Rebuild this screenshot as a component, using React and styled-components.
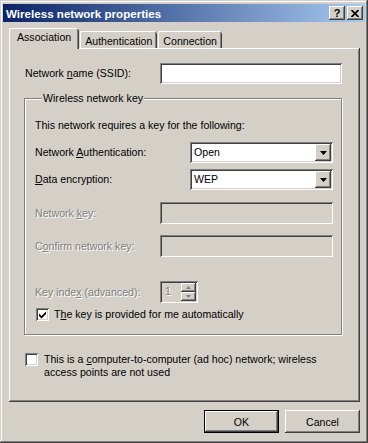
import React from "react"
import styled, { createGlobalStyle, css } from "styled-components"

const colors = {
  face: "#d4d0c8",
  light: "#ffffff",
  shadow: "#808080",
  dark: "#404040",
  text: "#000000",
  titleFrom: "#0a246a",
  titleTo: "#a6caf0",
}

const raised = css`
  box-shadow: inset -1px -1px ${colors.dark}, inset 1px 1px ${colors.light},
    inset -2px -2px ${colors.shadow}, inset 2px 2px ${colors.face};
`

const sunken = css`
  box-shadow: inset 1px 1px ${colors.shadow}, inset -1px -1px ${colors.light},
    inset 2px 2px ${colors.dark}, inset -2px -2px ${colors.face};
`

const GlobalStyle = createGlobalStyle`
  html, body {
    margin: 0;
    padding: 0;
    background: ${colors.face};
  }
  body {
    font-family: "Liberation Sans", Arial, sans-serif;
    font-size: 10.6px;
    color: ${colors.text};
  }
  * { box-sizing: border-box; }
`

const Window = styled.div`
  width: 368px;
  height: 443px;
  padding: 4px 3px;
  display: flex;
  flex-direction: column;
  background: ${colors.face};
  box-shadow: inset -1px -1px ${colors.dark}, inset 1px 1px ${colors.face},
    inset -2px -2px ${colors.shadow}, inset 2px 2px ${colors.light};
`

const TitleBar = styled.div`
  height: 18px;
  display: flex;
  align-items: center;
  padding: 0 2px 0 3px;
  background: linear-gradient(to right, ${colors.titleFrom}, ${colors.titleTo});
`

const Title = styled.span`
  flex: 1;
  color: #fff;
  font-weight: bold;
  font-size: 11.6px;
`

const TitleButtons = styled.div`
  display: flex;
  gap: 2px;
`

const TitleButton = styled.div`
  width: 16px;
  height: 14px;
  display: flex;
  align-items: center;
  justify-content: center;
  background: ${colors.face};
  font-weight: bold;
  font-size: 11px;
  line-height: 1;
  padding-top: 1px;
  ${raised}
`

const Body = styled.div`
  display: flex;
  flex-direction: column;
  padding: 0 5px 0 6px;
`

const TabStrip = styled.div`
  display: flex;
  align-items: flex-end;
  height: 26px;
  gap: 1px;
`

const Tab = styled.div`
  position: relative;
  z-index: ${p => (p.$active ? 1 : 0)};
  height: ${p => (p.$active ? "21px" : "17px")};
  margin-bottom: ${p => (p.$active ? "-1px" : "0")};
  padding: ${p => (p.$active ? "3px 8px 0" : "4px 5px 0")};
  background: ${colors.face};
  border-radius: 2px 2px 0 0;
  box-shadow: inset 1px 0 ${colors.light}, inset 0 1px ${colors.light},
    inset -1px 0 ${colors.dark}, inset -2px 0 ${colors.shadow};
  line-height: 13px;
  white-space: nowrap;
`

const Panel = styled.div`
  height: 354px;
  display: flex;
  flex-direction: column;
  padding: 15px 18px 0 16px;
  ${raised}
`

const Row = styled.div`
  display: grid;
  grid-template-columns: ${p => p.$cols};
  align-items: center;
  margin-top: ${p => p.$gap || 0}px;
`

const Label = styled.span`
  line-height: 13px;
  white-space: nowrap;
  color: ${p => (p.$disabled ? colors.shadow : colors.text)};
  text-shadow: ${p => (p.$disabled ? `1px 1px 0 ${colors.light}` : "none")};
`

const Key = styled.span`
  text-decoration: underline;
  text-underline-offset: 1px;
`

const TextBox = styled.div`
  height: ${p => p.$h || 21}px;
  background: ${p => (p.$disabled ? colors.face : colors.light)};
  ${sunken}
`

const Group = styled.fieldset`
  margin: 8px 0 0 -1px;
  padding: 0 8px 13px 10px;
  min-width: 0;
  border: 1px solid ${colors.shadow};
  box-shadow: inset 1px 1px ${colors.light}, 1px 1px ${colors.light};
`

const Legend = styled.legend`
  margin-left: 7px;
  padding: 0 1px;
  line-height: 13px;
  background: ${colors.face};
`

const Text = styled.div`
  line-height: 13px;
  margin-top: ${p => p.$gap || 0}px;
`

const SelectBox = styled.div`
  height: 21px;
  display: flex;
  align-items: center;
  padding: 0 2px 0 4px;
  background: ${colors.light};
  ${sunken}
`

const SelectValue = styled.span`
  flex: 1;
  line-height: 13px;
`

const DropButton = styled.div`
  width: 16px;
  height: 17px;
  display: flex;
  align-items: center;
  justify-content: center;
  background: ${colors.face};
  ${raised}
`

const SpinBox = styled.div`
  height: 22px;
  display: flex;
  align-items: stretch;
  padding: 2px;
  background: ${colors.face};
  ${sunken}
`

const SpinValue = styled.span`
  flex: 1;
  padding: 2px 0 0 3px;
  line-height: 13px;
  color: ${colors.shadow};
  text-shadow: 1px 1px 0 ${colors.light};
`

const SpinButtons = styled.div`
  width: 15px;
  display: flex;
  flex-direction: column;
`

const SpinButton = styled.div`
  flex: 1;
  display: flex;
  align-items: center;
  justify-content: center;
  background: ${colors.face};
  ${raised}
`

const CheckRow = styled.div`
  display: flex;
  align-items: flex-start;
  gap: ${p => p.$space || 5}px;
  margin-top: ${p => p.$gap || 0}px;
  padding-left: ${p => p.$indent || 0}px;
`

const CheckBox = styled.div`
  flex: none;
  width: 13px;
  height: 13px;
  display: flex;
  align-items: center;
  justify-content: center;
  background: ${colors.light};
  ${sunken}
`

const Footer = styled.div`
  display: flex;
  justify-content: flex-end;
  gap: 6px;
  margin-top: 8px;
`

const Button = styled.div`
  width: 75px;
  height: 23px;
  display: flex;
  align-items: center;
  justify-content: center;
  background: ${colors.face};
  ${p =>
    p.$default
      ? css`
          box-shadow: inset 0 0 0 1px ${colors.text},
            inset -2px -2px ${colors.dark}, inset 2px 2px ${colors.light},
            inset -3px -3px ${colors.shadow};
        `
      : raised}
`

const Arrow = () => (
  <svg width="7" height="4" viewBox="0 0 7 4">
    <polygon points="0,0 7,0 3.5,4" fill={colors.text} />
  </svg>
)

const SmallArrow = ({ down }) => (
  <svg width="5" height="3" viewBox="0 0 5 3">
    <polygon points={down ? "0,0 5,0 2.5,3" : "0,3 5,3 2.5,0"} fill={colors.shadow} />
  </svg>
)

const Check = () => (
  <svg width="7" height="8" viewBox="0 0 7 8">
    <polygon points="0,2.5 2.5,5 7,0.5 7,3 2.5,7.5 0,5" fill={colors.text} />
  </svg>
)

const CloseGlyph = () => (
  <svg width="8" height="7" viewBox="0 0 8 7">
    <path d="M0.5 0 L7.5 7 M7.5 0 L0.5 7" stroke={colors.text} strokeWidth="1.7" />
  </svg>
)

const Select = ({ value }) => (
  <SelectBox>
    <SelectValue>{value}</SelectValue>
    <DropButton>
      <Arrow />
    </DropButton>
  </SelectBox>
)

const App = () => {
  return (
    <>
      <GlobalStyle />
      <Window>
        <TitleBar>
          <Title>Wireless network properties</Title>
          <TitleButtons>
            <TitleButton>?</TitleButton>
            <TitleButton>
              <CloseGlyph />
            </TitleButton>
          </TitleButtons>
        </TitleBar>

        <Body>
          <TabStrip>
            <Tab $active>Association</Tab>
            <Tab>Authentication</Tab>
            <Tab>Connection</Tab>
          </TabStrip>

          <Panel>
            <Row $cols="135px 1fr">
              <Label>
                Network <Key>n</Key>ame (SSID):
              </Label>
              <TextBox />
            </Row>

            <Group>
              <Legend>Wireless network key</Legend>
              <Text $gap={14}>This network requires a key for the following:</Text>

              <Row $cols="155px 1fr" $gap={10}>
                <Label>
                  Network <Key>A</Key>uthentication:
                </Label>
                <Select value="Open" />
              </Row>
              <Row $cols="155px 1fr" $gap={6}>
                <Label>
                  <Key>D</Key>ata encryption:
                </Label>
                <Select value="WEP" />
              </Row>

              <Row $cols="125px 1fr" $gap={12}>
                <Label $disabled>
                  Network <Key>k</Key>ey:
                </Label>
                <TextBox $disabled $h={22} />
              </Row>
              <Row $cols="125px 1fr" $gap={11}>
                <Label $disabled>
                  C<Key>o</Key>nfirm network key:
                </Label>
                <TextBox $disabled $h={22} />
              </Row>

              <Row $cols="125px 38px" $gap={24}>
                <Label $disabled>
                  Key inde<Key>x</Key> (advanced):
                </Label>
                <SpinBox>
                  <SpinValue>1</SpinValue>
                  <SpinButtons>
                    <SpinButton>
                      <SmallArrow />
                    </SpinButton>
                    <SpinButton>
                      <SmallArrow down />
                    </SpinButton>
                  </SpinButtons>
                </SpinBox>
              </Row>

              <CheckRow $gap={5} $indent={1}>
                <CheckBox>
                  <Check />
                </CheckBox>
                <Label>
                  T<Key>h</Key>e key is provided for me automatically
                </Label>
              </CheckRow>
            </Group>

            <CheckRow $gap={18} $space={6}>
              <CheckBox />
              <Label>
                This is a <Key>c</Key>omputer-to-computer (ad hoc) network; wireless
                <br />
                access points are not used
              </Label>
            </CheckRow>
          </Panel>

          <Footer>
            <Button $default>OK</Button>
            <Button>Cancel</Button>
          </Footer>
        </Body>
      </Window>
    </>
  )
}

export default App
